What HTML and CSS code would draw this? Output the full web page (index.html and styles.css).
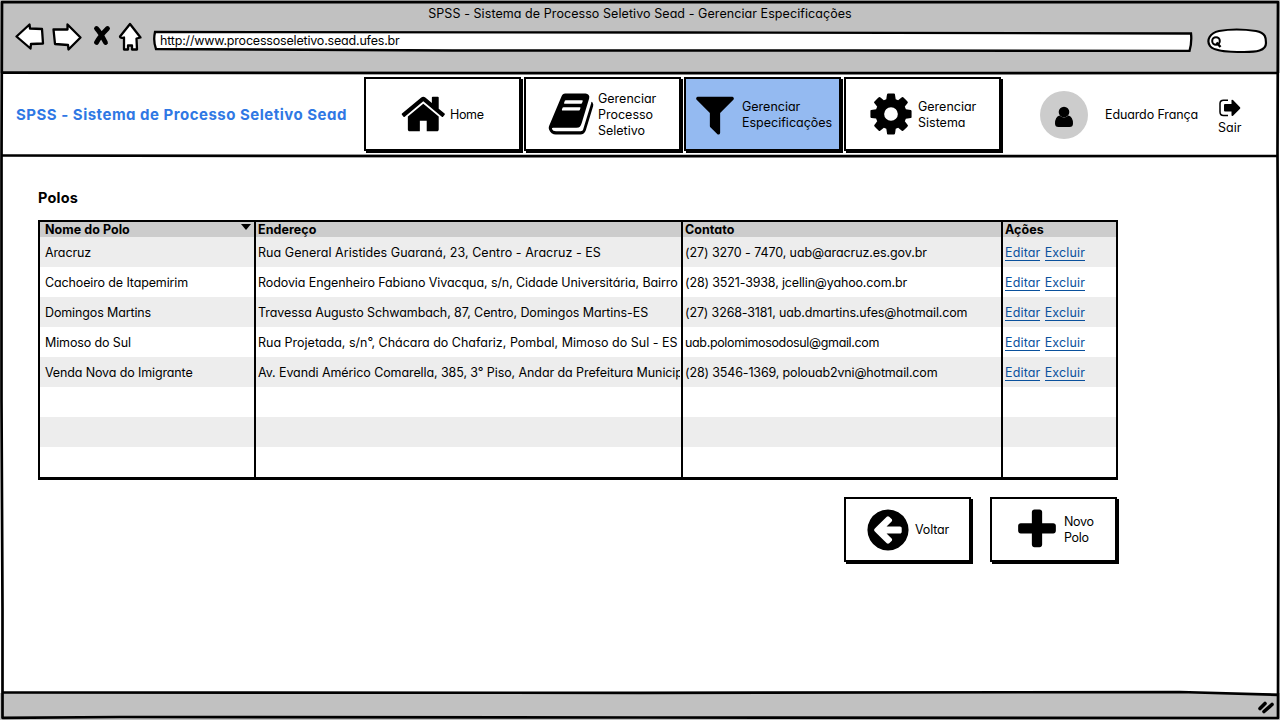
FILE: index.html
```html
<!DOCTYPE html>
<html lang="pt-BR">
<head>
<meta charset="utf-8">
<title>SPSS - Sistema de Processo Seletivo Sead - Gerenciar Especificações</title>
<link rel="stylesheet" href="styles.css">
</head>
<body>
<div class="window">
  <header class="chrome">
    <div class="window-title">SPSS - Sistema de Processo Seletivo Sead - Gerenciar Especificações</div>
    <div class="toolbar">
      <svg class="tools" viewBox="0 0 130 32" width="130" height="32">
        <g fill="#fff" stroke="#000" stroke-width="2.300" stroke-linejoin="round">
          <path d="M1.500 15.500 14.500 3.500 15 7.500 27 8 28 22.500 16 23 15.500 27.500Z"/>
          <path d="M38.500 8.500 52.500 8.500 52.500 3.500 65.500 16.500 53.500 28.500 53 24 40 23Z"/>
          <path d="M115 3 105 15.500Q105 17.500 109 16.500L109 28.500H113V24.500H117V28.500H122L121.500 17.500 125.500 16.500Z"/>
        </g>
        <path d="M81.500 7.500Q85 11 90.500 21.500M92.500 7.500Q85 15 81.500 21.500" fill="none" stroke="#000" stroke-width="4.800" stroke-linecap="round"/>
      </svg>
      <div class="address">
        <svg class="sketch" viewBox="0 0 1040 22" width="1040" height="22"><path d="M2 2 520 2.500 1038 3.500Q1039 12 1036.500 21L700 20.500 300 20.500 3 19Q0 11 2 2Z" fill="#fff" stroke="#000" stroke-width="2.300"/></svg>
        <span class="url">http://www.processoseletivo.sead.ufes.br</span>
      </div>
      <svg class="search" viewBox="0 0 62 28" width="62" height="28">
        <path d="M13 4Q30 1 50 4C60 6 60 11 60 16 60 24 50 25 38 25 26 25 8 25 4 19 0 13 4 6 13 4Z" fill="#fff" stroke="#000" stroke-width="2.200"/>
        <circle cx="10" cy="14" r="3.800" fill="none" stroke="#000" stroke-width="2"/>
        <path d="M10.500 15.500 14.500 20" stroke="#000" stroke-width="2.400"/>
      </svg>
    </div>
  </header>

  <nav class="nav">
    <div class="brand">SPSS - Sistema de Processo Seletivo Sead</div>
    <div class="menu">
      <div class="btn home"><svg viewBox="0 0 1792 1792"><path d="M1408 992v480q0 26-19 45t-45 19h-384v-384h-256v384h-384q-26 0-45-19t-19-45v-480q0-1 .5-3t.5-3l575-474 575 474q1 2 1 6zm223-69l-62 74q-8 9-21 11h-3q-13 0-21-7l-692-577-692 577q-12 8-24 7-13-2-21-11l-62-74q-8-10-7-23.500t11-21.500l719-599q32-26 76-26t76 26l244 204v-195q0-14 9-23t23-9h192q14 0 23 9t9 23v408l219 182q10 8 11 21.500t-7 23.500z"/></svg><span class="snug">Home</span></div>
      <div class="btn book"><svg viewBox="0 0 1792 1792"><path d="M1703 478q40 57 18 129l-275 906q-19 64-76.500 107.500t-122.500 43.500h-923q-77 0-148.500-53.500t-99.500-131.500q-24-67-2-127L540 240Q580 128 680 128h761q74 0 114 56t18 130l-274 906q-36 119-71.500 153.500t-128.500 34.500h-869q-27 0-38 15-11 16-1 43 24 70 144 70h923q29 0 56-15.500t35-41.500l300-987q7-22 5-57 38 15 59 43zm-1064 2q-4 13 2 22.500t20 9.500h608q13 0 25.500-9.500t16.500-22.500l21-64q4-13-2-22.500t-20-9.500h-608q-13 0-25.500 9.500t-16.500 22.500zm-83 256q-4 13 2 22.500t20 9.500h608q13 0 25.500-9.500t16.500-22.500l21-64q4-13-2-22.500t-20-9.500h-608q-13 0-25.500 9.500t-16.500 22.500z"/></svg><span>Gerenciar<br>Processo<br>Seletivo</span></div>
      <div class="btn filter active"><svg viewBox="0 0 1792 1792"><path d="M1595 295q17 41-14 70l-493 493v742q0 42-39 59-13 5-25 5-27 0-45-19l-256-256q-19-19-19-45v-486l-493-493q-31-29-14-70 17-39 59-39h1280q42 0 59 39z"/></svg><span>Gerenciar<br>Especificações</span></div>
      <div class="btn gear"><svg viewBox="0 0 1792 1792"><path d="M1152 896q0-106-75-181t-181-75-181 75-75 181 75 181 181 75 181-75 75-181zm512-109v222q0 12-8 23t-20 13l-185 28q-19 54-39 91 35 50 107 138 10 12 10 25t-9 23q-27 37-99 108t-94 71q-12 0-26-9l-138-108q-44 23-91 38-16 136-29 186-7 28-36 28h-222q-14 0-24.500-8.500t-11.500-21.500l-28-184q-49-16-90-37l-141 107q-10 9-25 9-14 0-25-11-126-114-165-168-7-10-7-23 0-12 8-23 15-21 51-66.500t54-70.500q-27-50-41-99l-183-27q-13-2-21-12.500t-8-23.500v-222q0-12 8-23t19-13l186-28q14-46 39-92-40-57-107-138-10-12-10-24 0-10 9-23 26-36 98.500-107.500t94.500-71.500q13 0 26 10l138 107q44-23 91-38 16-136 29-186 7-28 36-28h222q14 0 24.500 8.500t11.500 21.500l28 184q49 16 90 37l142-107q9-9 24-9 13 0 25 10 129 119 165 170 7 8 7 22 0 12-8 23-15 21-51 66.500t-54 70.500q26 50 41 98l183 28q13 2 21 12.500t8 23.500z"/></svg><span>Gerenciar<br>Sistema</span></div>
    </div>
    <div class="avatar"><svg viewBox="0 0 18 22" width="18" height="22"><circle cx="9" cy="6" r="5.300"/><path d="M4.500 9.500Q9 13.500 13.500 9.500 18 11 18 17.500 18 21 14.500 21H3.500Q0 21 0 17.500 0 11 4.500 9.500Z"/></svg></div>
    <div class="user">Eduardo França</div>
    <div class="logout">
      <svg viewBox="0 0 22 18" width="22" height="18"><path d="M9 1.200H4.500Q1 1.200 1 4.500V13Q1 16.500 4.500 16.500H9" fill="none" stroke="#000" stroke-width="1.500"/><path d="M6 5H12.500V1Q13 .3 14 1L21 8.200Q21.700 9 21 9.800L14 16.800Q13 17.300 12.500 16.500V12.500H6Q5 12.500 5 11.500V6Q5 5 6 5Z"/></svg>
      <span>Sair</span>
    </div>
  </nav>

  <main class="main">
    <h1 class="heading">Polos</h1>
    <div class="table">
      <div class="row head"><div>Nome do Polo<i class="sort"></i></div><div>Endereço</div><div>Contato</div><div>Ações</div></div>
      <div class="row"><div>Aracruz</div><div class="loose">Rua General Aristides Guaraná, 23, Centro - Aracruz - ES</div><div class="close">(27) 3270 - 7470, uab@aracruz.es.gov.br</div><div><a>Editar</a> <a>Excluir</a></div></div>
      <div class="row"><div>Cachoeiro de Itapemirim</div><div class="close">Rodovia Engenheiro Fabiano Vivacqua, s/n, Cidade Universitária, Bairro</div><div class="tight">(28) 3521-3938, jcellin@yahoo.com.br</div><div><a>Editar</a> <a>Excluir</a></div></div>
      <div class="row"><div>Domingos Martins</div><div class="close">Travessa Augusto Schwambach, 87, Centro, Domingos Martins-ES</div><div class="tight">(27) 3268-3181, uab.dmartins.ufes@hotmail.com</div><div><a>Editar</a> <a>Excluir</a></div></div>
      <div class="row"><div>Mimoso do Sul</div><div>Rua Projetada, s/n°, Chácara do Chafariz, Pombal, Mimoso do Sul - ES</div><div class="snug">uab.polomimosodosul@gmail.com</div><div><a>Editar</a> <a>Excluir</a></div></div>
      <div class="row"><div>Venda Nova do Imigrante</div><div class="close">Av. Evandi Américo Comarella, 385, 3° Piso, Andar da Prefeitura Municip</div><div class="tight">(28) 3546-1369, polouab2vni@hotmail.com</div><div><a>Editar</a> <a>Excluir</a></div></div>
      <div class="row"><div></div><div></div><div></div><div></div></div>
      <div class="row"><div></div><div></div><div></div><div></div></div>
      <div class="row"><div></div><div></div><div></div><div></div></div>
    </div>
    <div class="actions">
      <div class="btn back"><svg viewBox="0 0 1792 1792"><path d="M1408 960v-128q0-26-19-45t-45-19h-502l189-189q19-19 19-45t-19-45l-91-91q-18-18-45-18t-45 18l-362 362-91 91q-18 18-18 45t18 45l91 91 362 362q18 18 45 18t45-18l91-91q18-18 18-45t-18-45l-189-189h502q26 0 45-19t19-45zm256-64q0 209-103 385.500t-279.500 279.500-385.500 103-385.500-103-279.500-279.500-103-385.500 103-385.500 279.500-279.500 385.500-103 385.500 103 279.500 279.500 103 385.500z"/></svg><span class="tight">Voltar</span></div>
      <div class="btn new"><svg viewBox="0 0 1792 1792"><path d="M1600 736v192q0 40-28 68t-68 28h-416v416q0 40-28 68t-68 28h-192q-40 0-68-28t-28-68v-416h-416q-40 0-68-28t-28-68v-192q0-40 28-68t68-28h416v-416q0-40 28-68t68-28h192q40 0 68 28t28 68v416h416q40 0 68 28t28 68z"/></svg><span class="snug">Novo<br>Polo</span></div>
    </div>
  </main>

  <footer class="status"></footer>

  <svg class="frame" viewBox="0 0 1280 720" width="1280" height="720">
    <g fill="none" stroke="#000" stroke-width="2.700" stroke-linejoin="round">
      <path d="M2 2.200 1278 2.200 1277.500 150 1278.500 420 1278 718 640 717.500 120 717 2.500 717.800 2.500 610 1.500 400 1.500 160Z"/>
      <path d="M2 72.700 600 73.200 1278 73"/>
      <path d="M1 155.500 640 156.200 1278 156"/>
      <path d="M2 692.500 640 692.800 1180 692 1278 694.800"/>
    </g>
    <path d="M1260 708.500 1265 703.500M1264 711.500 1272 704.500" stroke="#000" stroke-width="3.600" stroke-linecap="round"/>
  </svg>
</div>
</body>
</html>
```
FILE: styles.css
```css
* { box-sizing: border-box; }

body {
  margin: 0;
  background: #fff;
  color: #000;
  font: 12.5px/16px Inter, "Open Sans", sans-serif;
  font-feature-settings: "cv11", "calt" 0;
}

svg { display: block; flex: none; }

.window {
  position: relative;
  width: 1280px;
  height: 720px;
  display: flex;
  flex-direction: column;
  overflow: hidden;
}

.frame { position: absolute; inset: 0; pointer-events: none; }

.chrome { height: 73px; background: #c1c1c1; padding-top: 6px; }
.window-title { height: 15px; text-align: center; letter-spacing: 0.07px; }
.toolbar { display: flex; padding-left: 15px; }
.address { position: relative; width: 1040px; height: 22px; margin: 9px 0 0 8px; padding: 3px 0 0 7px; }
.address .sketch { position: absolute; left: 0; top: 0; }
.url { position: relative; letter-spacing: -0.19px; }
.search { margin: 6px 0 0 13px; }

.nav { height: 83px; display: flex; padding-left: 16px; }
.brand {
  width: 348px;
  padding-top: 34px;
  font-size: 15px;
  font-weight: 700;
  letter-spacing: 0.5px;
  color: #2f78e4;
  white-space: nowrap;
}
.menu { display: flex; gap: 3px; padding-top: 4px; }

.btn {
  width: 157px;
  height: 74px;
  display: flex;
  align-items: center;
  background: #fff;
  border: 2px solid #000;
  box-shadow: 2px 2px #000;
}
.btn svg { width: 48px; height: 48px; }
.btn span { padding-top: 1px; }
.btn.active { background: #94baf1; }
.home { padding-left: 35px; gap: 1px; }
.book { padding-left: 21px; gap: 3px; }
.filter { padding-left: 5px; gap: 3px; }
.gear { padding-left: 21px; gap: 3px; }

.loose { letter-spacing: 0.04px; }
.close { letter-spacing: -0.09px; }
.tight { letter-spacing: -0.15px; }
.snug { letter-spacing: -0.35px; }

.avatar {
  width: 48px;
  height: 48px;
  margin: 18px 0 0 39px;
  border-radius: 50%;
  background: #ccc;
  display: flex;
  align-items: center;
  justify-content: center;
}
.avatar svg { margin-top: 3px; }
.user { width: 114px; margin-left: 17px; padding-top: 34px; letter-spacing: -0.12px; }
.logout { padding-top: 26px; }
.logout span { display: block; margin: 3px 0 0 -1px; }

.main { flex: 1; padding: 33px 0 0 38px; }
.heading { margin: 0; font-size: 14.5px; line-height: 17px; height: 16px; font-weight: 700; letter-spacing: 0.2px; }

.table { width: 1080px; margin-top: 15px; border: 2.5px solid #000; border-top-width: 2px; border-bottom-width: 3px; }
.row {
  display: grid;
  grid-template: 30px / 216px 427px 320px 1fr;
  line-height: 32px;
}
.row:nth-child(even) { background: #ededed; }
.row > div { overflow: hidden; white-space: nowrap; padding-left: 2px; border-right: 2px solid #000; }
.row > div:nth-child(2) { border-right: 0; padding: 0; margin: 0 3px 0 2px; }
.row > div:nth-child(3) { border-left: 2px solid #000; margin-left: -2px; }
.row > div:first-child { padding-left: 5px; letter-spacing: -0.13px; }
.row > div:last-child { border-right: 0; letter-spacing: 0.15px; }
.row.head { grid-template-rows: 15px; line-height: 15px; background: #ccc; font-weight: 700; }
.row.head > div { letter-spacing: 0.05px; }
.head > div:first-child { display: flex; justify-content: space-between; }
.sort { border: 5px solid transparent; border-top: 6px solid #000; border-bottom: 0; margin: 2px 3px 0 0; height: 6px; }
.row a { color: #0a519d; border-bottom: 1px solid #0a519d; }
.row a + a { margin-left: 0.6px; }

.actions { display: flex; gap: 19px; padding-left: 806px; margin-top: 17px; }
.actions .btn { width: 127px; height: 65px; }
.back { padding-left: 18px; gap: 3px; }
.new { padding-left: 21px; gap: 3px; }

.status { height: 27px; background: #c1c1c1; }
```
